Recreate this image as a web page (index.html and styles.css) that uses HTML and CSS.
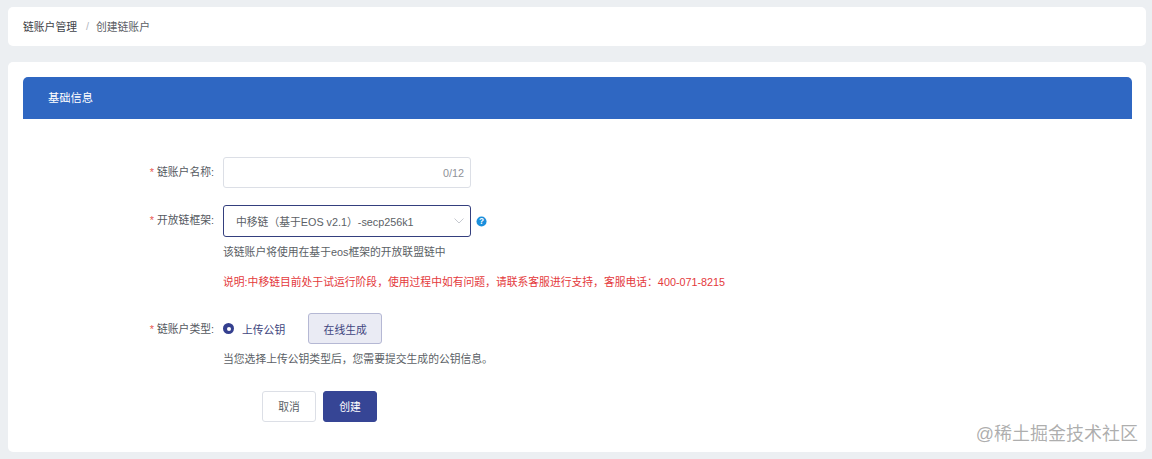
FILE: index.html
```html
<!DOCTYPE html>
<html lang="zh-CN">
<head>
<meta charset="utf-8">
<title>创建链账户</title>
<link rel="stylesheet" href="styles.css">
</head>
<body>
<nav class="crumbs card">
  <span class="crumb-root">链账户管理</span>
  <span class="crumb-sep">/</span>
  <span class="crumb-current">创建链账户</span>
</nav>
<main class="main card">
  <header class="section-head">基础信息</header>
  <form class="form">
    <div class="row row-name">
      <label class="label"><i class="star">*</i>链账户名称:</label>
      <div class="input-box"><span class="count">0/12</span></div>
    </div>
    <div class="row row-frame">
      <label class="label label-select"><i class="star">*</i>开放链框架:</label>
      <div class="control">
        <div class="select-line">
          <div class="select">
            <span>中移链（基于EOS v2.1）-secp256k1</span>
            <svg class="chevron" viewBox="0 0 10 6" width="10" height="6"><path d="M.5 .5l4.5 4.5 4.5-4.5" fill="none" stroke="#c6c9d0" stroke-width="1"/></svg>
          </div>
          <svg class="help" viewBox="0 0 12 12" width="11" height="11"><circle cx="6" cy="6" r="5.5" fill="#1a8fdc"/><text x="6" y="9.2" text-anchor="middle" class="help-mark">?</text></svg>
        </div>
        <p class="hint hint-frame">该链账户将使用在基于eos框架的开放联盟链中</p>
        <p class="warn">说明:中移链目前处于试运行阶段，使用过程中如有问题，请联系客服进行支持，客服电话：400-071-8215</p>
      </div>
    </div>
    <div class="row row-type">
      <label class="label label-type"><i class="star">*</i>链账户类型:</label>
      <div class="control">
        <div class="type-line">
          <span class="radio"></span>
          <span class="radio-text">上传公钥</span>
          <button type="button" class="btn-ghost">在线生成</button>
        </div>
        <p class="hint hint-type">当您选择上传公钥类型后，您需要提交生成的公钥信息。</p>
      </div>
    </div>
    <div class="actions">
      <button type="button" class="btn btn-cancel">取消</button>
      <button type="button" class="btn btn-primary">创建</button>
    </div>
  </form>
  <div class="watermark">@稀土掘金技术社区</div>
</main>
</body>
</html>
```
FILE: styles.css
```css
* { box-sizing: border-box; }
html, body { margin: 0; height: 459px; overflow: hidden; }
body {
  background: #eceff2;
  padding: 7px 6px 0 8px;
  font-family: "Liberation Sans", "Noto Sans CJK SC", sans-serif;
  font-size: 10.8px;
  color: #4a4f58;
}
.card { background: #fff; border-radius: 5px; }
.crumbs {
  height: 39px;
  display: flex;
  align-items: center;
  padding: 0 15px 2px;
}
.crumb-root { color: #3f4349; }
.crumb-sep { margin: 0 7px 0 9px; color: #b4b8bf; }
.crumb-current { color: #5c6066; }
.main {
  position: relative;
  margin-top: 16px;
  height: 390px;
  padding: 15px 14px 0 15px;
}
.section-head {
  height: 42px;
  line-height: 42px;
  padding-left: 25px;
  background: #2f67c2;
  border-radius: 5px 5px 0 0;
  color: #fff;
  font-size: 11.25px;
}
.form { padding-top: 38px; }
.row { display: flex; }
.label {
  width: 200px;
  flex: none;
  padding-right: 9px;
  text-align: right;
  line-height: 31px;
  color: #55595f;
}
.star { font-style: normal; color: #e8574f; margin-right: 3px; }
.input-box {
  width: 248px;
  height: 31px;
  border: 1px solid #dcdfe6;
  border-radius: 3px;
  display: flex;
  align-items: center;
  justify-content: flex-end;
  padding-right: 6px;
}
.count { color: #8e9198; }
.row-frame { margin-top: 17px; }
.label-select { line-height: 30px; }
.select-line { display: flex; align-items: center; }
.select {
  width: 248px;
  height: 32px;
  border: 1px solid #343f7e;
  border-radius: 3px;
  display: flex;
  align-items: center;
  justify-content: space-between;
  padding: 0 6px 0 12px;
  color: #5b5f66;
}
.chevron { display: block; }
.help { margin-left: 5px; display: block; }
.help-mark { font-size: 9px; font-weight: 700; fill: #fff; font-family: "Liberation Sans", sans-serif; }
.hint { margin: 0; line-height: 16px; color: #5b5f66; }
.hint-frame { margin-top: 7px; }
.warn { margin: 14px 0 0; line-height: 16px; color: #e4393c; }
.row-type { margin-top: 23px; }
.label-type { line-height: 33px; }
.type-line { display: flex; align-items: center; height: 31px; }
.radio {
  width: 11px;
  height: 11px;
  border-radius: 50%;
  background: #343f8f;
  display: flex;
  align-items: center;
  justify-content: center;
}
.radio::after { content: ""; width: 4px; height: 4px; border-radius: 50%; background: #fff; }
.radio-text { margin-left: 8px; color: #3f4680; }
.btn-ghost {
  margin-left: 23px;
  width: 74px;
  height: 31px;
  padding: 0;
  border: 1px solid #b5b8d4;
  border-radius: 3px;
  background: #eaebf4;
  color: #3f4680;
  font: inherit;
}
.hint-type { margin-top: 7px; }
.actions { display: flex; gap: 7px; margin-top: 24px; padding-left: 239px; }
.btn {
  width: 54px;
  height: 31px;
  padding: 0 0 2px;
  border-radius: 3px;
  font: inherit;
}
.btn-cancel { background: #fff; border: 1px solid #dcdfe6; color: #5b5f66; }
.btn-primary { background: #364595; border: 1px solid #364595; color: #fff; }
.watermark {
  position: absolute;
  right: 8px;
  bottom: 7px;
  font-size: 18px;
  line-height: 22px;
  color: rgba(120, 120, 120, 0.6);
}
```
